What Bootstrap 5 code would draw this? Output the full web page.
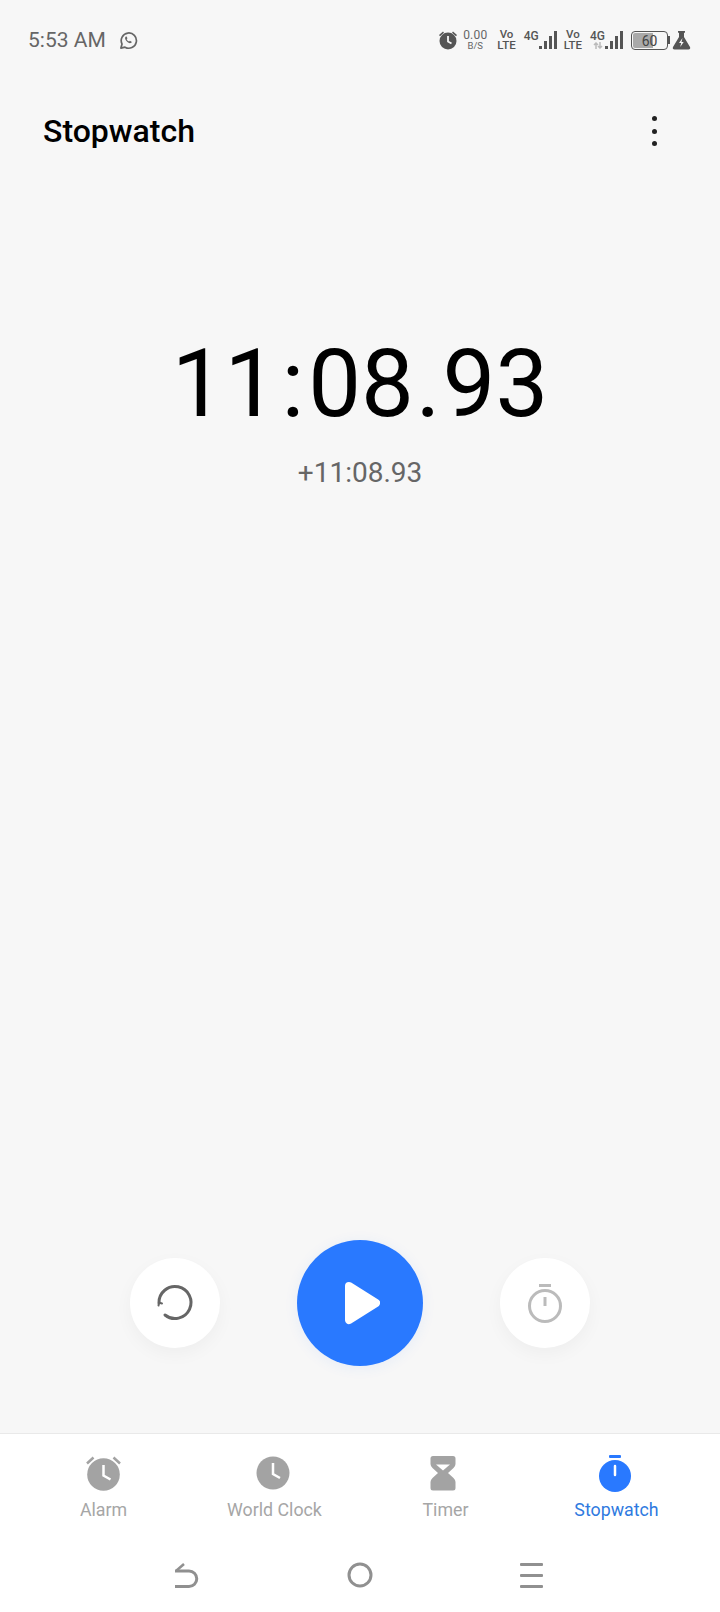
<!DOCTYPE html>
<html lang="en">
  <head>
    <meta charset="UTF-8" />
    <title>Stopwatch</title>
    <link href="https://cdn.jsdelivr.net/npm/bootstrap@5.3.3/dist/css/bootstrap.min.css" rel="stylesheet" />
    <style>
      body {
        width: 720px;
        height: 1612px;
        background: #f7f7f7;
        font-family: Roboto, "Liberation Sans", sans-serif;
        overflow: hidden;
      }
      .status-bar { height: 80px; padding: 0 28px; color: #666; }
      .status-time { font-size: 21px; line-height: 24px; }
      .status-app { margin-left: 13px; }
      .status-small { font-size: 11.500px; line-height: 11px; font-weight: 500; color: #555; text-align: center; }
      .status-net { font-size: 12px; line-height: 12px; font-weight: 500; color: #555; margin: 1px 0 0 8px; }
      .status-tiny { font-size: 9.500px; line-height: 10px; color: #666; text-align: center; }
      .status-speed { font-size: 12px; line-height: 12px; color: #666; text-align: center; letter-spacing: .2px; }
      .speed-box { margin: 0 10px 0 5px; }
      .lte-box { margin-left: 6px; }
      .battery { width: 37px; height: 19px; margin-left: 7px; border: 1.500px solid #555; border-radius: 4px; font-size: 14px; line-height: 16px; color: #444; text-align: center; background: linear-gradient(90deg, #aaa 60%, transparent 60%); background-clip: content-box; padding: 1px; }
      .title-row { height: 102px; padding: 0 43px; }
      .title-text { font-size: 32px; font-weight: 500; color: #000; margin: 0; line-height: 40px; }
      .menu-dot { width: 5px; height: 5px; background: #222; border-radius: 50%; }
      .menu-col { gap: 7.500px; margin-right: 20px; }
      .time-big { font-size: 94px; line-height: 110px; color: #000; margin-top: 147px; font-weight: 400; }
      .time-colon { display: inline-block; padding: 0 4px; }
      .time-dot { display: inline-block; padding: 0 2px; }
      .time-sub { font-size: 28px; line-height: 34px; color: #666; margin-top: 17px; }
      .controls { padding-bottom: 67px; gap: 77px; }
      .round-small { width: 90px; height: 90px; background: #fff; box-shadow: 0 6px 18px rgba(0, 0, 0, .04); }
      .round-play { width: 126px; height: 126px; background: #2979ff; box-shadow: 0 2px 14px rgba(41, 121, 255, .08); }
      .tab-bar { height: 179px; background: #fff; border-top: 1px solid #e9e9e9; padding: 20px 18px 0; }
      .tab-item { width: 172px; }
      .tab-label { font-size: 17.800px; line-height: 24px; color: #a6a6a6; margin-top: 4px; }
      .tab-active { color: #2f7ae0; }
      .nav-keys { height: 64px; padding-top: 39px; }
      .nav-key { width: 170px; }
    </style>
  </head>
  <body class="d-flex flex-column">
    <!-- status bar -->
    <div class="status-bar d-flex align-items-center justify-content-between">
      <div class="d-flex align-items-center">
        <span class="status-time">5:53 AM</span>
        <svg class="status-app" width="19" height="19" viewBox="0 0 20 20" fill="none" stroke="#666" stroke-width="1.800">
          <path d="M2 18l1.200-4.300A8 8 0 1 1 6.300 17z" stroke-linejoin="round" />
          <path d="M7 6c-1 1-.8 2.500.6 4.300 1.500 1.800 3.200 2.800 4.700 2.400.8-.2 1.200-1 1-1.500l-1.800-1-.9.9c-1.200-.5-2-1.400-2.500-2.500l.8-.9-.9-1.900c-.5-.2-.7-.1-1 .2z" fill="#666" stroke="none" />
        </svg>
      </div>
      <div class="d-flex align-items-center">
        <svg width="20" height="20" viewBox="0 0 20 20" fill="#555">
          <circle cx="10" cy="11" r="8.500" />
          <path d="M1 5l4-3.500 1 1.200-4 3.500zM19 5l-4-3.500-1 1.200 4 3.500z" />
          <path d="M10 6v5.500l3.500 2" fill="none" stroke="#f7f7f7" stroke-width="1.800" />
        </svg>
        <div class="speed-box">
          <div class="status-speed">0.00</div>
          <div class="status-tiny">B/S</div>
        </div>
        <div class="status-small">Vo<br />LTE</div>
        <div class="status-net align-self-start">4G</div>
        <svg width="19" height="19" viewBox="0 0 19 19" fill="#555">
          <rect x="0" y="15" width="3" height="3" /><rect x="5" y="10" width="3" height="8" /><rect x="10" y="5" width="3" height="13" /><rect x="15" y="0" width="3" height="18" />
        </svg>
        <div class="lte-box status-small">Vo<br />LTE</div>
        <div class="status-net align-self-start">
          4G
          <svg class="d-block mx-auto" width="10" height="7" viewBox="0 0 10 7" fill="none" stroke="#bbb" stroke-width="1.500">
            <path d="M3 7V1M1 3l2-2 2 2M7 0v6M5 4l2 2 2-2" />
          </svg>
        </div>
        <svg width="19" height="19" viewBox="0 0 19 19" fill="#555">
          <rect x="0" y="15" width="3" height="3" /><rect x="5" y="10" width="3" height="8" /><rect x="10" y="5" width="3" height="13" /><rect x="15" y="0" width="3" height="18" />
        </svg>
        <div class="battery">60</div>
        <svg width="24" height="19" viewBox="0 0 24 19" fill="#555">
          <rect x="0" y="5" width="2" height="8" />
          <path d="M10 0h7v1.500l-1 .5v4l6 10c.6 1.300 0 2.500-1.500 2.500H6.500C5 18.500 4.400 17.300 5 16l6-10V2l-1-.5z" />
          <path d="M14.500 7l-3.500 5h2.200l-1 4 3.500-5h-2.200z" fill="#f7f7f7" />
        </svg>
      </div>
    </div>

    <!-- title -->
    <div class="title-row d-flex align-items-center justify-content-between">
      <h1 class="title-text">Stopwatch</h1>
      <div class="menu-col d-flex flex-column">
        <div class="menu-dot"></div>
        <div class="menu-dot"></div>
        <div class="menu-dot"></div>
      </div>
    </div>

    <!-- time -->
    <div class="flex-grow-1 d-flex flex-column align-items-center">
      <div class="time-big">11<span class="time-colon">:</span>08<span class="time-dot">.</span>93</div>
      <div class="time-sub">+11:08.93</div>
      <div class="mt-auto controls d-flex align-items-center">
        <div class="round-small rounded-circle d-flex align-items-center justify-content-center">
          <svg width="40" height="40" viewBox="0 0 40 40" fill="none" stroke="#666" stroke-width="3" stroke-linecap="round">
            <path d="M4 20A16 16 0 1 1 10 32" />
            <path d="M3.500 22.500l.5-3 3 1" stroke-width="2" />
          </svg>
        </div>
        <div class="round-play rounded-circle d-flex align-items-center justify-content-center">
          <svg width="40" height="46" viewBox="0 0 40 46" fill="#fff" stroke="#fff" stroke-width="8" stroke-linejoin="round">
            <path d="M9 6L36 23L9 40z" />
          </svg>
        </div>
        <div class="round-small rounded-circle d-flex align-items-center justify-content-center">
          <svg width="40" height="46" viewBox="0 0 40 46" fill="none" stroke="#bbb" stroke-width="3">
            <circle cx="20" cy="26" r="15.500" />
            <path d="M14 5.500h12" />
            <path d="M20 17v9" />
          </svg>
        </div>
      </div>
    </div>

    <!-- tabs -->
    <div class="tab-bar">
      <div class="d-flex">
        <div class="tab-item d-flex flex-column align-items-center">
          <svg width="40" height="40" viewBox="0 0 40 40" fill="#a3a3a3">
            <circle cx="19.500" cy="20.500" r="16.300" />
            <path d="M3 9.500l6.500-6M36 9.500l-6.500-6" fill="none" stroke="#a3a3a3" stroke-width="2.500" />
            <path d="M19.500 11v10.500l7 4" fill="none" stroke="#fff" stroke-width="2.500" />
          </svg>
          <div class="tab-label">Alarm</div>
        </div>
        <div class="tab-item d-flex flex-column align-items-center">
          <svg width="40" height="40" viewBox="0 0 40 40" fill="#a3a3a3">
            <circle cx="18" cy="19" r="16.500" />
            <path d="M18 9v11l7 4" fill="none" stroke="#fff" stroke-width="2.500" />
          </svg>
          <div class="tab-label">World Clock</div>
        </div>
        <div class="tab-item d-flex flex-column align-items-center">
          <svg width="40" height="40" viewBox="0 0 40 40" fill="#a3a3a3">
            <g transform="translate(-3 -1)">
              <path d="M10 3h20a2.500 2.500 0 0 1 2.500 2.500V11q0 2-2 4l-5.500 5 5.500 5q2 2 2 4v6a2.500 2.500 0 0 1-2.500 2.500H10A2.500 2.500 0 0 1 7.500 35v-6q0-2 2-4l5.500-5-5.500-5q-2-2-2-4V5.500A2.500 2.500 0 0 1 10 3z" />
              <path d="M13 11.500h14l-7 6z" fill="#fff" />
            </g>
          </svg>
          <div class="tab-label">Timer</div>
        </div>
        <div class="tab-item d-flex flex-column align-items-center">
          <svg width="40" height="40" viewBox="0 0 40 40" fill="#2979ff">
            <circle cx="18" cy="22" r="16" />
            <rect x="12" y="1" width="12" height="3" rx="1" />
            <path d="M18 12v9" fill="none" stroke="#fff" stroke-width="2.500" stroke-linecap="round" />
          </svg>
          <div class="tab-label tab-active">Stopwatch</div>
        </div>
      </div>
      <div class="nav-keys d-flex justify-content-center">
        <div class="nav-key d-flex justify-content-center">
          <svg class="me-2" width="26" height="28" viewBox="0 0 26 28" fill="none" stroke="#909090" stroke-width="3">
            <path d="M2 10h14a7.750 7.750 0 0 1 0 15.500H2" />
            <path d="M11 3L3.500 9.500" stroke-width="2.500" />
          </svg>
        </div>
        <div class="nav-key d-flex justify-content-center">
          <svg width="26" height="28" viewBox="0 0 26 28" fill="none" stroke="#909090" stroke-width="3">
            <circle cx="13" cy="14" r="11" />
          </svg>
        </div>
        <div class="nav-key d-flex justify-content-center">
          <svg width="26" height="28" viewBox="0 0 26 28" fill="#909090">
            <rect x="3" y="2" width="23" height="3" rx="1" /><rect x="3" y="13" width="23" height="3" rx="1" /><rect x="3" y="24" width="23" height="3" rx="1" />
          </svg>
        </div>
      </div>
    </div>
  </body>
</html>
